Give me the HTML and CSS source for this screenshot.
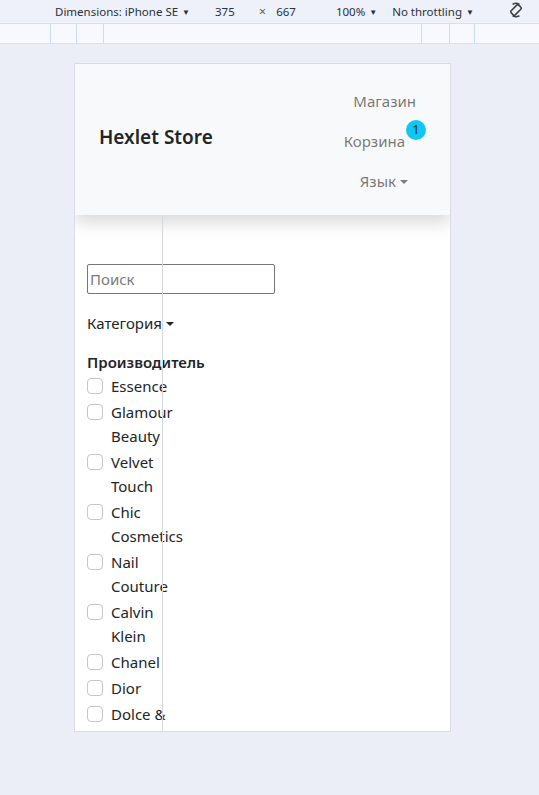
FILE: index.html
```html
<!DOCTYPE html>
<html lang="ru">
<head>
<meta charset="utf-8">
<title>Hexlet Store</title>
<link rel="stylesheet" href="styles.css">
</head>
<body>
<div class="toolbar">
  <span class="tb-item tb-dims">Dimensions: iPhone SE <span class="tb-caret">▼</span></span>
  <span class="tb-item tb-w">375</span>
  <span class="tb-item tb-x">×</span>
  <span class="tb-item tb-h">667</span>
  <span class="tb-item tb-zoom">100% <span class="tb-caret">▼</span></span>
  <span class="tb-item tb-thr">No throttling <span class="tb-caret">▼</span></span>
  <svg class="tb-rotate" width="18" height="18" viewBox="0 0 20 20">
    <g transform="rotate(45 10 10)" fill="none" stroke="#3c4043" stroke-width="1.8" stroke-linecap="round">
      <rect x="6.8" y="4" width="6.4" height="12" rx="1.6"/>
      <path d="M3 7.5 A7.6 7.6 0 0 1 7.5 3"/>
      <path d="M17 12.5 A7.6 7.6 0 0 1 12.5 17"/>
    </g>
  </svg>
</div>
<div class="ruler">
  <div class="seg s1"></div>
  <div class="seg s2"></div>
  <div class="seg s3"></div>
  <div class="seg s4"></div>
  <div class="seg s5"></div>
  <div class="seg s6"></div>
  <div class="seg s7"></div>
</div>
<div class="stage">
  <div class="device">
    <nav class="navbar">
      <a class="brand">Hexlet Store</a>
      <ul class="nav">
        <li class="nav-item"><a class="nav-link">Магазин</a></li>
        <li class="nav-item"><a class="nav-link cart">Корзина<span class="badge">1</span></a></li>
        <li class="nav-item"><a class="nav-link lang">Язык<span class="caret"></span></a></li>
      </ul>
    </nav>
    <main class="content">
      <input class="search" type="text" placeholder="Поиск">
      <div class="category">Категория<span class="caret dark"></span></div>
      <div class="filter-title">Производитель</div>
      <div class="checks">
        <label class="check"><input type="checkbox"><span class="check-label">Essence</span></label>
        <label class="check"><input type="checkbox"><span class="check-label">Glamour Beauty</span></label>
        <label class="check"><input type="checkbox"><span class="check-label">Velvet Touch</span></label>
        <label class="check"><input type="checkbox"><span class="check-label">Chic Cosmetics</span></label>
        <label class="check"><input type="checkbox"><span class="check-label">Nail Couture</span></label>
        <label class="check"><input type="checkbox"><span class="check-label">Calvin Klein</span></label>
        <label class="check"><input type="checkbox"><span class="check-label">Chanel</span></label>
        <label class="check"><input type="checkbox"><span class="check-label">Dior</span></label>
        <label class="check"><input type="checkbox"><span class="check-label">Dolce &amp; Gabbana</span></label>
      </div>
    </main>
    <div class="guide"></div>
  </div>
</div>
</body>
</html>
```
FILE: styles.css
```css
* { box-sizing: border-box; }
html, body { margin: 0; padding: 0; }
body {
  width: 539px;
  height: 795px;
  overflow: hidden;
  background: #ebeef7;
  font-family: "Noto Sans", "Liberation Sans", sans-serif;
}

/* devtools toolbar */
.toolbar {
  height: 23px;
  background: #eef1f9;
  display: flex;
  align-items: center;
  font-size: 11.5px;
  color: #2b3038;
}
.tb-item { white-space: nowrap; line-height: 23px; }
.tb-caret { font-size: 8px; position: relative; top: -1px; margin-left: 1px; }
.tb-dims { margin-left: 55px; }
.tb-w { margin-left: 25px; }
.tb-x { margin-left: 24px; color: #5f6368; font-size: 13px; }
.tb-h { margin-left: 10px; }
.tb-zoom { margin-left: 40px; }
.tb-thr { margin-left: 15px; }
.tb-rotate { margin-left: 33px; margin-top: -3px; }

.ruler {
  height: 21px;
  background: #f7f9fe;
  border-top: 1px solid #d3e0f5;
  border-bottom: 1px solid #d3e0f5;
  display: flex;
}
.seg { height: 100%; }
.seg + .seg { border-left: 1px solid #c9dbf7; }
.s1 { width: 50px; }
.s2 { width: 26px; }
.s3 { width: 27px; }
.s4 { width: 318px; }
.s5 { width: 28px; }
.s6 { width: 25px; }
.s7 { flex: 1; }

/* stage + device */
.stage {
  padding: 19px 0 0 74px;
}
.device {
  position: relative;
  width: 377px;
  height: 669px;
  border: 1px solid #dadce2;
  background: #fff;
  overflow: hidden;
  color: #212529;
  font-size: 15px;
  line-height: 24px;
}

.navbar {
  position: relative;
  z-index: 2;
  height: 151px;
  background: #f8f9fa;
  box-shadow: 0 8px 16px rgba(0, 0, 0, 0.15);
  display: flex;
  align-items: center;
  justify-content: space-between;
  padding: 17px 0 14px 24px;
}
.brand {
  font-size: 19px;
  font-weight: 600;
  line-height: 30px;
  color: #212529;
  margin-bottom: 8px;
}
.nav {
  list-style: none;
  margin: 0;
  padding: 0 34px 0 0;
  display: flex;
  flex-direction: column;
  align-items: flex-end;
}
.nav-link {
  display: block;
  padding: 8px 0;
  color: rgba(0, 0, 0, 0.55);
  position: relative;
}
.cart { margin-right: 11px; }
.lang { margin-right: 8px; }
.caret {
  display: inline-block;
  margin-left: 4px;
  vertical-align: 3px;
  border-top: 4px solid rgba(0, 0, 0, 0.5);
  border-left: 4px solid transparent;
  border-right: 4px solid transparent;
}
.caret.dark { border-top-color: #212529; }
.badge {
  position: absolute;
  left: calc(100% + 1px);
  top: -1px;
  width: 20px;
  height: 20px;
  border-radius: 50%;
  background: #10c8ef;
  color: #1d2530;
  font-size: 12px;
  line-height: 20px;
  text-align: center;
}

.content {
  padding: 49px 0 0 12px;
}
.search {
  display: block;
  width: 188px;
  height: 30px;
  margin: 0;
  padding: 0 2px;
  border: 1px solid #767676;
  border-radius: 2px;
  font-family: inherit;
  font-size: 15px;
  color: #212529;
  background: #fff;
}
.search::placeholder { color: #7a7a7a; }
.category {
  margin-top: 17px;
}
.filter-title {
  margin-top: 15px;
  font-weight: 600;
}
.checks { display: flex; flex-direction: column; }
.check {
  display: flex;
  align-items: flex-start;
  margin-bottom: 2px;
}
.check input {
  appearance: none;
  -webkit-appearance: none;
  flex: none;
  width: 16px;
  height: 16px;
  margin: 4px 8px 0 0;
  border: 1px solid #c4c6c9;
  border-radius: 4px;
  background: #fff;
}
.check-label {
  max-width: 80px;
}

.guide {
  position: absolute;
  left: 87px;
  top: 151px;
  bottom: 0;
  width: 1px;
  background: #d6d8dc;
  z-index: 3;
}
```
